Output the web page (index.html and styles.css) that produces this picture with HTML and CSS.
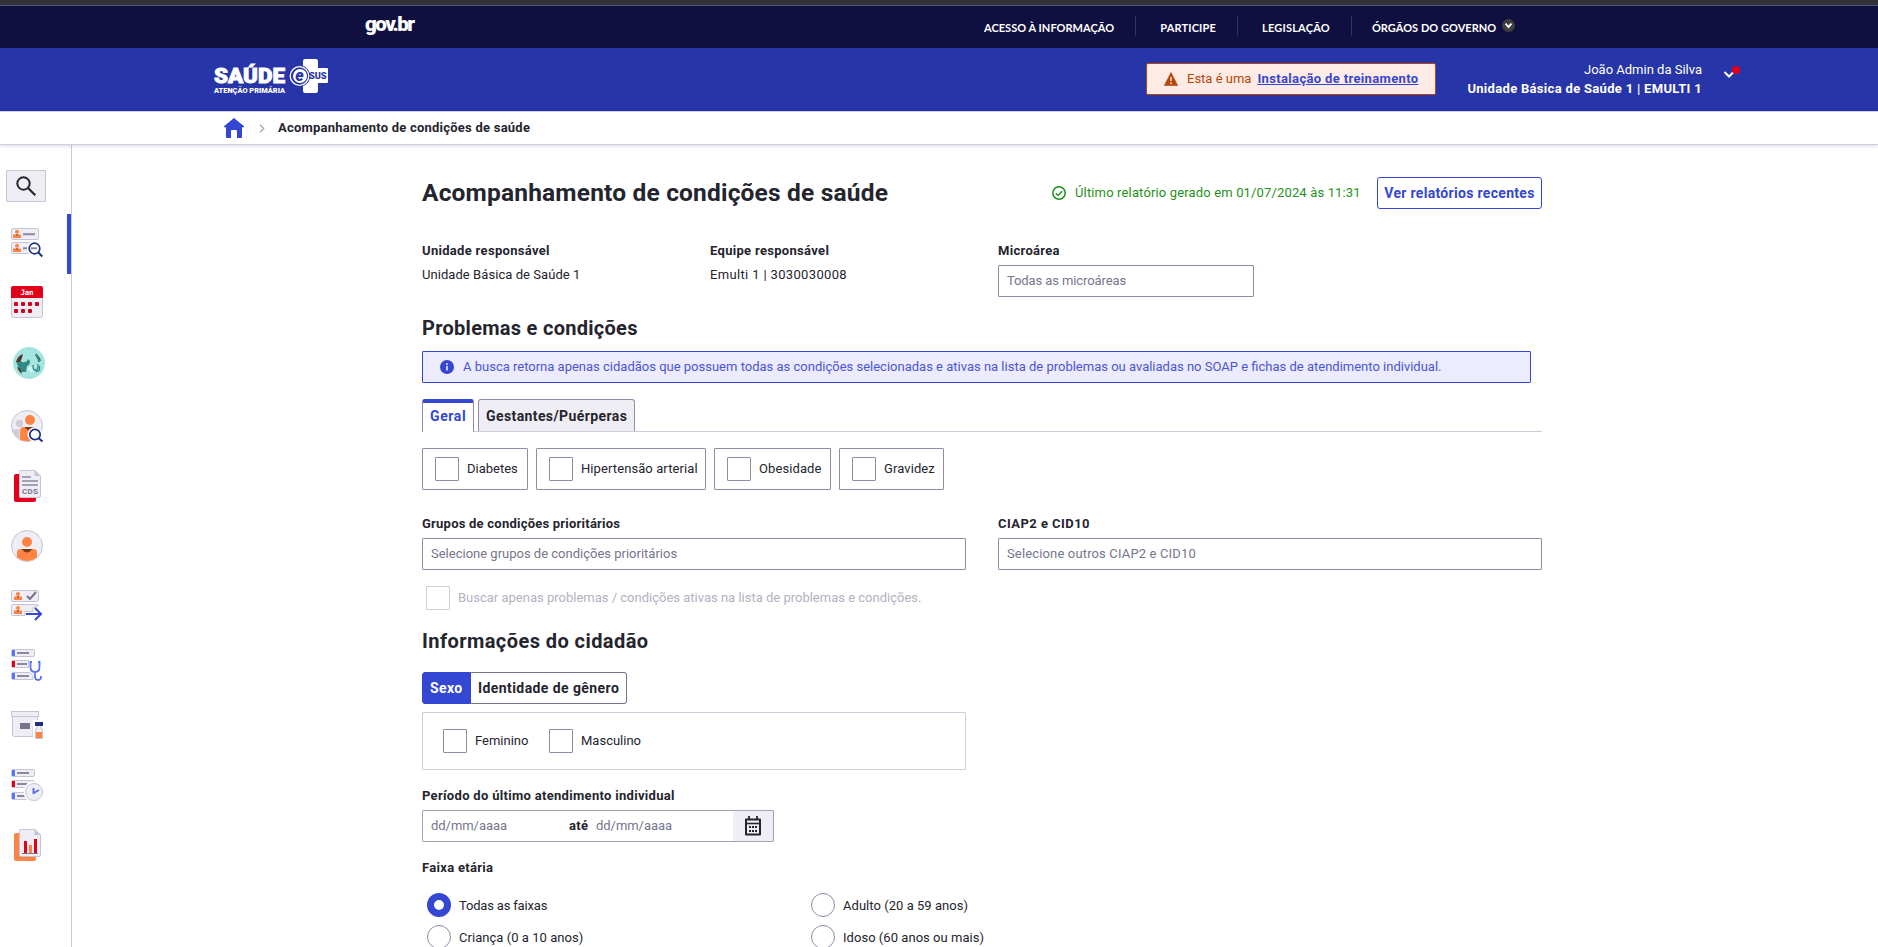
FILE: index.html
```html
<!DOCTYPE html>
<html lang="pt-BR">
<head>
<meta charset="utf-8">
<title>Acompanhamento de condições de saúde</title>
<link rel="stylesheet" href="styles.css">
</head>
<body>
<div class="window-edge"></div>
<header class="govbar">
  <svg class="gov-logo" width="52" height="26" viewBox="0 0 52 26"><text x="0" y="17" font-size="20.500" font-weight="900" textLength="50" lengthAdjust="spacing" fill="#fff">gov.br</text></svg>
  <nav class="gov-nav">
    <a>ACESSO À INFORMAÇÃO</a><a>PARTICIPE</a><a>LEGISLAÇÃO</a><a>ÓRGÃOS DO GOVERNO</a>
    <svg class="gov-caret" width="13" height="13" viewBox="0 0 13 13"><circle cx="6.5" cy="6.5" r="6.5" fill="#3f3f3f"/><path d="M3.600 4.600 6.500 8l2.900-3.400" fill="none" stroke="#fff" stroke-width="1.800"/></svg>
  </nav>
</header>
<header class="appbar">
  <svg class="app-logo" width="116" height="36" viewBox="0 0 116 36">
    <g fill="#fff" font-weight="900">
      <text x="0" y="24.500" font-size="21" textLength="71" lengthAdjust="spacingAndGlyphs" stroke="#fff" stroke-width=".9">SAÚDE</text>
      <text x="0" y="34.500" font-size="7" textLength="71" lengthAdjust="spacingAndGlyphs">ATENÇÃO PRIMÁRIA</text>
    </g>
    <path d="M91 1h11q2 0 2 2v7h9q1 0 1 1v13q0 1-1 1h-9v8q0 2-2 2H91q-2 0-2-2V3q0-2 2-2z" fill="#fff"/>
    <circle cx="85.500" cy="18" r="10.700" fill="#2735a8"/>
    <circle cx="85.500" cy="18" r="9.300" fill="none" stroke="#fff" stroke-width="1.300"/>
    <circle cx="86" cy="18" r="7" fill="#fff"/>
    <text x="81.300" y="23" font-size="16" font-weight="900" font-style="italic" fill="#2735a8">e</text>
    <text x="95" y="21" font-size="8.500" font-weight="900" textLength="17.500" lengthAdjust="spacingAndGlyphs" fill="#2735a8">SUS</text>
  </svg>
  <div class="training">
    <svg width="14" height="14" viewBox="0 0 14 14"><path d="M7 .5 13.700 13.500H.3z" fill="#b54708" stroke="#b54708" stroke-width=".6" stroke-linejoin="round"/><path d="M7 5v4M7 10.300v1.600" stroke="#ffebe6" stroke-width="1.400"/></svg>
    <span class="training-text">Esta é uma</span><a class="training-link">Instalação de treinamento</a>
  </div>
  <div class="user"><span>João Admin da Silva</span><b>Unidade Básica de Saúde 1 | EMULTI 1</b></div>
  <svg class="user-caret" width="18" height="18" viewBox="0 0 18 18"><path d="M1.500 10 6 14.500 10.500 10" fill="none" stroke="#fff" stroke-width="2"/><circle cx="13" cy="8" r="4" fill="#e2001a"/></svg>
</header>
<div class="crumbs">
  <svg width="20" height="20" viewBox="0 0 20 20"><path d="M10 0 0 8.300V9.200h2V19q0 1 1 1h4v-7q0-1 1-1h4q1 0 1 1v7h4q1 0 1-1V9.200h2V8.300z" fill="#3347d3"/></svg>
  <svg class="crumb-sep" width="6" height="9" viewBox="0 0 6 9"><path d="m1 .8 3.700 3.700L1 8.200" fill="none" stroke="#a9a8b8" stroke-width="1.300"/></svg>
  <b class="crumb-text">Acompanhamento de condições de saúde</b>
</div>
<div class="body">
<aside class="side">
  <div class="side-search"><svg width="20" height="20" viewBox="0 0 20 20"><circle cx="7.500" cy="7.500" r="6.200" fill="none" stroke="#24252e" stroke-width="2"/><path d="m12 12 7.300 7.300" stroke="#24252e" stroke-width="2.200"/></svg></div>
  <div class="side-item up active"><svg viewBox="0 0 32 32"><g fill="#f0eef5" stroke="#c6c4d4"><rect x=".5" y="2.500" width="27" height="11" rx="1.500"/><rect x=".5" y="16.500" width="27" height="11" rx="1.500"/></g><g fill="#ff8444"><circle cx="6" cy="5.700" r="2"/><path d="M2 12V8.500h8V12z"/><circle cx="6" cy="19.700" r="2"/><path d="M2 26v-3.500h8V26z"/></g><path d="M4.500 8.500h3L6 10zM4.500 22.500h3L6 24z" fill="#7a3b12"/><path d="M12 8.300h12M12 22.300h4" stroke="#8a88a0" stroke-width="2"/><circle cx="24" cy="22.500" r="8" fill="#fff"/><path d="M20 22.300h6" stroke="#8a88a0" stroke-width="2"/><circle cx="23.500" cy="22.500" r="5.300" fill="none" stroke="#1f2e85" stroke-width="1.700"/><path d="m27.300 26.500 4 4" stroke="#1f2e85" stroke-width="2"/></svg></div>
  <div class="side-item up"><svg viewBox="0 0 32 32"><rect x=".5" y=".5" width="31" height="31" rx="2" fill="#f0eef5" stroke="#c6c4d4"/><path d="M2 0h28q2 0 2 2v10H0V2q0-2 2-2z" fill="#e2001a"/><text x="9.500" y="9" font-family="DejaVu Sans Mono" font-size="7.500" font-weight="700" fill="#fff" textLength="13">Jan</text><g fill="#d4001a"><rect x="3" y="16" width="4" height="4" rx="1"/><rect x="10" y="16" width="4" height="4" rx="1"/><rect x="17" y="16" width="4" height="4" rx="1"/><rect x="24" y="16" width="4" height="4" rx="1"/><rect x="3" y="23" width="4" height="4" rx="1"/><rect x="10" y="23" width="4" height="4" rx="1"/><rect x="17" y="23" width="4" height="4" rx="1"/></g></svg></div>
  <div class="side-item up"><svg viewBox="0 0 32 32"><circle cx="18" cy="17" r="16" fill="#a5e6e0"/><circle cx="18" cy="17" r="14" fill="none" stroke="#8ad6cf" stroke-dasharray="1 3"/><path d="M5 15q4-2 6 1 5 1 6-3l2 2q0 4-3 5l-1 6h-4q-4-4-6-11z" fill="#2f8b82"/><path d="M5 16q2-7 7-8-1 5-3 8zM6 21q4 0 5 7-4-3-5-7zM24 8q5 2 6 7-4-1-6-7z" fill="#5c3533"/><path d="M25 8q3 4 3 8" fill="none" stroke="#2f8b82" stroke-width="2"/><path d="M16 23q4-5 7-1l-2 5z" fill="#d2f6f2"/><path d="M22 19v2q0 3 2.500 3t2.500-3v-3M24.500 24q1 3 4 0v-4" fill="none" stroke="#2f8b82" stroke-width="1.300"/></svg></div>
  <div class="side-item down"><svg viewBox="0 0 32 32"><circle cx="16" cy="16" r="15.500" fill="#f0eef5" stroke="#c6c4d4"/><circle cx="8.500" cy="13.500" r="3.700" fill="#cfcddb"/><path d="M1.500 20q1-1 7-1v10q-5-2-7-9z" fill="#cfcddb"/><circle cx="19" cy="10" r="5" fill="#ff8444"/><path d="M9 30V21q0-4 4-4h11q4 0 4 4v7q-8 5-19 2z" fill="#ff8444"/><path d="M13.500 17h10q-4.500 7-10 0z" fill="#7a3b12"/><circle cx="24" cy="24.500" r="7.500" fill="#fff"/><circle cx="24" cy="24.500" r="5.200" fill="none" stroke="#1f2e85" stroke-width="1.700"/><path d="m27.700 28.300 3.800 3.200" stroke="#1f2e85" stroke-width="2"/></svg></div>
  <div class="side-item down"><svg viewBox="0 0 32 32"><rect x="3" y="4" width="22" height="28" rx="2" fill="#e2001a"/><path d="M9.500.5H24l5.500 5.500v20q0 1.500-1.500 1.500H9.500q-1 0-1-1V1.500q0-1 1-1z" fill="#f0eef5" stroke="#c6c4d4"/><path d="M23.500.5V6h6z" fill="#c6c4d4"/><path d="M11 7h9M11 11h16M11 15h16" stroke="#8a88a0" stroke-width="1.700"/><text x="11" y="24" font-size="8" font-weight="700" fill="#77758d" textLength="16">CDS</text></svg></div>
  <div class="side-item down"><svg viewBox="0 0 32 32"><circle cx="16" cy="16" r="15.500" fill="#f0eef5" stroke="#c6c4d4"/><circle cx="16" cy="12" r="5" fill="#ff8444"/><path d="M6 27.500V22q0-3 4-3h12q4 0 4 3v5.500q-10 7-20 0z" fill="#ff8444"/><path d="M10.500 19h11q-5.500 7-11 0z" fill="#7a3b12"/></svg></div>
  <div class="side-item down"><svg viewBox="0 0 32 32"><g fill="#f0eef5" stroke="#c6c4d4"><rect x=".5" y=".5" width="27" height="11" rx="1.500"/><path d="M27.500 16q0-1.500-1.500-1.500H2q-1.500 0-1.500 1.500v8q0 1.500 1.500 1.500h12v-4h8v-4z"/></g><g fill="#ff8444"><circle cx="7" cy="3.900" r="2"/><path d="M3 10V6.500h8V10z"/><circle cx="7" cy="17.900" r="2"/><path d="M3 24v-3.500h8V24z"/></g><path d="M5.500 6.500h3L7 8zM5.500 20.500h3L7 22z" fill="#7a3b12"/><path d="m16 6 3 3 6-7" fill="none" stroke="#77758d" stroke-width="2"/><path d="M15 24h15M24 18l6 6-6 6" fill="none" stroke="#3347d3" stroke-width="2"/></svg></div>
  <div class="side-item down"><svg viewBox="0 0 32 32"><g fill="#f0eef5" stroke="#c6c4d4"><rect x=".5" y="-.5" width="23" height="7" rx="1.500"/><path d="M17.500 10.500H2q-1.500 0-1.500 1.500v4q0 1.500 1.500 1.500h15.500z"/><path d="M2 22.500h17l3 3v4H2q-1.500 0-1.500-1.500v-4q0-1.500 1.500-1.500z"/></g><path d="M1 0h3v6H1zM1 23h3v6H1z" fill="#5c73f2"/><path d="M1 11h3v6H1z" fill="#e2001a"/><path d="M6 3h12M6 14h10M6 26h12" stroke="#8a88a0" stroke-width="2"/><path d="M21 12h-1.500v5q0 5 4.500 5t4.500-5v-5H27M24 22v4q0 4 3.200 4t2.800-4" fill="none" stroke="#5c73f2" stroke-width="1.800"/></svg></div>
  <div class="side-item"><svg viewBox="0 0 32 32"><path d="M1.500 7.500h25V14L22 18v10.500H3.500q-2 0-2-2z" fill="#f0eef5" stroke="#c6c4d4"/><rect x=".5" y="3.500" width="27" height="5" fill="#f0eef5" stroke="#c6c4d4"/><rect x="9" y="15" width="10" height="6" fill="#77758d"/><path d="M22 12h10v20H22z" fill="#fff"/><rect x="24" y="14" width="8" height="4" fill="#1f2e85"/><path d="M26 18v3h-1.500v9.500h7V21H30v-3" fill="#f0eef5" stroke="#c6c4d4"/><rect x="25" y="24" width="6" height="6" fill="#ff8444"/></svg></div>
  <div class="side-item down"><svg viewBox="0 0 32 32"><g fill="#f0eef5" stroke="#c6c4d4"><rect x=".5" y="-.5" width="23" height="7" rx="1.500"/><rect x=".5" y="10.500" width="23" height="7" rx="1.500"/><rect x=".5" y="22.500" width="23" height="7" rx="1.500"/></g><path d="M1 0h3v6H1zM1 23h3v6H1z" fill="#5c73f2"/><path d="M1 11h3v6H1z" fill="#e2001a"/><path d="M6 3h12M6 14h10M6 26h10" stroke="#8a88a0" stroke-width="2"/><circle cx="23" cy="22" r="10.500" fill="#fff"/><circle cx="23" cy="22" r="8.500" fill="#f0eef5" stroke="#c6c4d4"/><path d="M22.500 18v6M22 23.500l6-3.500" stroke="#5c73f2" stroke-width="2"/></svg></div>
  <div class="side-item report"><svg viewBox="0 0 32 32"><rect x="3" y="4" width="22" height="28" rx="2" fill="#ff8444"/><path d="M9.500.5H24l5.500 5.500v20q0 1.500-1.500 1.500H9.500q-1 0-1-1V1.500q0-1 1-1z" fill="#f0eef5" stroke="#c6c4d4"/><path d="M23.500.5V6h6z" fill="#c6c4d4"/><path d="M13 12h3v12h-3zM23 10h3v14h-3z" fill="#e2001a"/><path d="M18 16h3v8h-3z" fill="#ff8444"/><path d="M11 24.500h16" stroke="#77758d"/></svg></div>
</aside>
<main class="main">
  <div class="head">
    <h1>Acompanhamento de condições de saúde</h1>
    <svg class="ok" width="14" height="14" viewBox="0 0 14 14"><circle cx="7" cy="7" r="6.200" fill="none" stroke="#1f9118" stroke-width="1.500"/><path d="m3.900 7.200 2.200 2.200 4-4.200" fill="none" stroke="#1f9118" stroke-width="1.400"/></svg>
    <span class="last">Último relatório gerado em 01/07/2024 às 11:31</span>
    <button class="btn">Ver relatórios recentes</button>
  </div>
  <div class="info">
    <div class="field"><b>Unidade responsável</b><span class="unit">Unidade Básica de Saúde 1</span></div>
    <div class="field"><b>Equipe responsável</b><span class="team">Emulti 1 | 3030030008</span></div>
    <div class="field"><b>Microárea</b><div class="input t-micro">Todas as microáreas</div></div>
  </div>
  <h2 class="h-problems">Problemas e condições</h2>
  <div class="notice"><svg width="14" height="14" viewBox="0 0 14 14"><circle cx="7" cy="7" r="7" fill="#3347d3"/><path d="M7 6v4.500M7 3.200v1.700" stroke="#ecebff" stroke-width="1.600"/></svg><span>A busca retorna apenas cidadãos que possuem todas as condições selecionadas e ativas na lista de problemas ou avaliadas no SOAP e fichas de atendimento individual.</span></div>
  <div class="tabs"><b class="tab on">Geral</b><b class="tab off">Gestantes/Puérperas</b></div>
  <div class="cards">
    <label class="card"><i class="box"></i><span>Diabetes</span></label>
    <label class="card wide"><i class="box"></i><span class="t-card">Hipertensão arterial</span></label>
    <label class="card mid"><i class="box"></i><span class="t-card">Obesidade</span></label>
    <label class="card short"><i class="box"></i><span class="t-card">Gravidez</span></label>
  </div>
  <div class="pair">
    <div class="field"><b class="tight">Grupos de condições prioritários</b><div class="input">Selecione grupos de condições prioritários</div></div>
    <div class="field"><b class="loose">CIAP2 e CID10</b><div class="input t-cid">Selecione outros CIAP2 e CID10</div></div>
  </div>
  <label class="disabled"><i class="box"></i><span>Buscar apenas problemas / condições ativas na lista de problemas e condições.</span></label>
  <h2 class="h-citizen">Informações do cidadão</h2>
  <div class="seg"><b class="seg-on">Sexo</b><b class="seg-off">Identidade de gênero</b></div>
  <div class="sexbox">
    <label><i class="box"></i><span>Feminino</span></label>
    <label><i class="box"></i><span>Masculino</span></label>
  </div>
  <div class="field period"><b>Período do último atendimento individual</b>
    <div class="dates"><span class="date-from">dd/mm/aaaa</span><b>até</b><span class="date-to">dd/mm/aaaa</span>
      <div class="cal"><svg width="16" height="20" viewBox="0 0 16 20"><path d="M1 3.500h14v15H1z" fill="none" stroke="#24252e" stroke-width="2" stroke-linejoin="round"/><path d="M1 7.500h14" stroke="#24252e" stroke-width="1.600"/><path d="M4 0v4M12 0v4" stroke="#24252e" stroke-width="1.800"/><path d="M4 10h2v2H4zM7 10h2v2H7zM10 10h2v2h-2zM4 14h2v2H4zM7 14h2v2H7zM10 14h2v2h-2z" fill="#24252e"/></svg></div></div>
  </div>
  <b class="age">Faixa etária</b>
  <div class="radios">
    <label><i class="radio sel"></i><span class="t-all">Todas as faixas</span></label>
    <label><i class="radio"></i><span>Adulto (20 a 59 anos)</span></label>
    <label><i class="radio"></i><span>Criança (0 a 10 anos)</span></label>
    <label><i class="radio"></i><span>Idoso (60 anos ou mais)</span></label>
  </div>
</main>
</div>
</body>
</html>
```
FILE: styles.css
```css
*{box-sizing:border-box}
body{margin:0;height:947px;overflow:hidden;background:#fff;color:#24252e;font:13px/20px Roboto,sans-serif}
b,h1,h2{font-weight:700;white-space:nowrap}
b{letter-spacing:.31px}
span,a{white-space:nowrap}
svg{display:block;flex:none;overflow:visible}

/* top bars */
.window-edge{height:6px;background:#2f3136;border-bottom:1px solid #50557a}
.govbar{height:42px;background:#0f1040;display:flex;padding-left:365px}
.gov-logo{margin-top:8px}
.gov-nav{display:flex;margin-left:567px;color:#fff;font-family:Lato,sans-serif;font-weight:700;font-size:11px;letter-spacing:.04px}
.gov-nav a{margin-top:10px;height:20px;line-height:24px}
.gov-nav a+a{border-left:1px solid #33345e;margin-left:21px;padding-left:24px}
.gov-nav a:nth-child(2){letter-spacing:.17px}
.gov-nav a:nth-child(3){letter-spacing:.2px}
.gov-nav a:nth-child(4){padding-left:20px}
.gov-caret{margin:13px 0 0 6px}
.appbar{height:63px;background:#2735a8;display:flex;padding-left:214px}
.app-logo{margin-top:10px}
.training{margin:15px 0 0 816px;width:290px;height:32px;border:1px solid #b54708;border-radius:2px;background:#ffebe6;display:flex;align-items:center;padding-left:17px;color:#b54708}
.training-text{margin-left:9px}
.training-link{margin-left:6px;font-weight:700;letter-spacing:.35px;color:#3347d3;text-decoration:underline}
.user{width:266px;margin-top:12px;display:flex;flex-direction:column;align-items:flex-end;line-height:19px;color:#fff}
.user-caret{margin:14px 0 0 21px}
.crumbs{position:relative;flex:none;height:34px;border-top:1px solid #cfcfe0;border-bottom:1px solid #cfcfe0;box-shadow:0 1px 4px rgba(0,0,0,.15);display:flex;align-items:center;padding-left:224px;background:#fff}
.crumb-sep{margin:0 13px 0 15px}
.crumb-text{letter-spacing:.23px}

/* side menu */
.body{display:flex;height:802px}
.side{width:72px;flex:none;border-right:1px solid #c9c9d9;padding-top:25px}
.side-search{width:40px;height:32px;margin-left:6px;border:1px solid #c6c4d4;border-radius:1px;background:#f0eef5;display:flex;align-items:center;justify-content:center}
.side-item{height:60px;padding:14px 0 0 11px}
.side-item.up{padding-top:12px}
.side-item.down{padding-top:16px}
.side-item.report{padding-top:15px}
.side-item svg{width:32px;height:32px}
.side-search+.side-item{margin-top:12px}
.active{border-right:4px solid #3347d3}

/* form */
.main{margin-left:350px;padding-top:32px;width:1120px;display:flex;flex-direction:column}
.main>*{flex:none}
.head{display:flex;align-items:center;height:32px}
h1{margin:0;font-size:24.5px;line-height:32px;letter-spacing:.18px;flex:1}
.last{color:#1f9118;letter-spacing:.15px;width:286px;margin:0 16px 0 9px}
.btn{width:165px;height:32px;padding:0;border:1px solid #3347d3;border-radius:3px;background:#fff;color:#3347d3;font:700 14px/20px Roboto,sans-serif;letter-spacing:.31px}
.info{display:grid;grid-template-columns:288px 288px 256px;height:56px;margin-top:32px}
.field{display:flex;flex-direction:column;gap:4px}
.unit{letter-spacing:.06px}
.team{letter-spacing:.345px}
.input{height:32px;border:1px solid #8f8ca5;border-radius:1px;padding:0 8px;line-height:30px;color:#77758d}
.t-micro{letter-spacing:-.1px}
h2{margin:0;font-size:20px;line-height:24px;letter-spacing:.28px}
.h-problems{margin-top:19px}
.notice{width:1109px;height:32px;margin-top:11px;border:1px solid #3347d3;border-radius:1px;background:#ecebff;color:#4a56d4;display:flex;align-items:center;gap:9px;padding-left:17px}
.tabs{display:flex;gap:4px;height:33px;margin-top:16px;border-bottom:1px solid #cfcddb}
.tab{font-size:14px;letter-spacing:.4px;line-height:32px;height:32px;padding:0 7px;border:1px solid #8f8ca5;border-bottom:0;border-radius:3px 3px 0 0}
.on{width:52px;height:33px;border-top:4px solid #3347d3;line-height:27px;color:#3347d3;background:#fff;letter-spacing:.6px}
.off{width:157px;background:#f0eef5}
.cards{display:flex;gap:8px;height:42px;margin-top:16px}
.card{width:106px;border:1px solid #8f8ca5;border-radius:1px;display:flex;align-items:center;gap:8px;padding-left:12px}
.wide{width:170px}
.mid{width:117px}
.short{width:105px}
.t-card{letter-spacing:.09px}
.box{flex:none;width:24px;height:24px;border:1px solid #8f8ca5;border-radius:1px;background:#fff}
.pair{display:grid;grid-template-columns:544px 544px;gap:32px;margin-top:24px}
.tight{letter-spacing:.23px}
.loose{letter-spacing:.45px}
.t-cid{letter-spacing:.15px}
.disabled{display:flex;gap:8px;align-items:center;height:24px;margin:16px 0 0 4px;color:#b3b1c2}
.disabled .box{border-color:#cfcddb}
.h-citizen{margin-top:19px;letter-spacing:.43px}
.seg{display:flex;height:32px;width:205px;margin-top:19px;font-size:14px;line-height:30px}
.seg b{letter-spacing:.42px}
.seg-on{width:49px;padding-left:7px;background:#3347d3;border:1px solid #3347d3;border-radius:3px 0 0 3px;color:#fff}
.seg-off{flex:1;padding-left:7px;border:1px solid #77758d;border-left:0;border-radius:0 3px 3px 0}
.sexbox{display:flex;align-items:center;width:544px;height:58px;margin-top:8px;padding-left:20px;border:1px solid #cfcddb;border-radius:1px}
.sexbox label{display:flex;align-items:center;gap:8px;width:106px}
.period{width:352px;margin-top:16px}
.dates{display:flex;height:32px;border:1px solid #a3a1b5;border-radius:1px;line-height:30px;color:#77758d}
.date-from{width:146px;padding-left:8px;letter-spacing:-.05px}
.dates b{width:27px;color:#24252e}
.date-to{flex:1;letter-spacing:-.05px}
.cal{width:40px;background:#f0eef5;display:flex;align-items:center;justify-content:center}
.age{margin-top:16px}
.radios{display:grid;grid-template-columns:384px 384px;row-gap:8px;margin-top:15px;padding-left:5px}
.radios label{display:flex;align-items:center;gap:8px;height:24px}
.radios span{padding-top:1px;letter-spacing:.04px}
.radio{width:24px;height:24px;border:1px solid #8f8ca5;border-radius:50%;background:#fff}
.sel{border:7px solid #3347d3}
.radios .t-all{letter-spacing:-.18px}
```
